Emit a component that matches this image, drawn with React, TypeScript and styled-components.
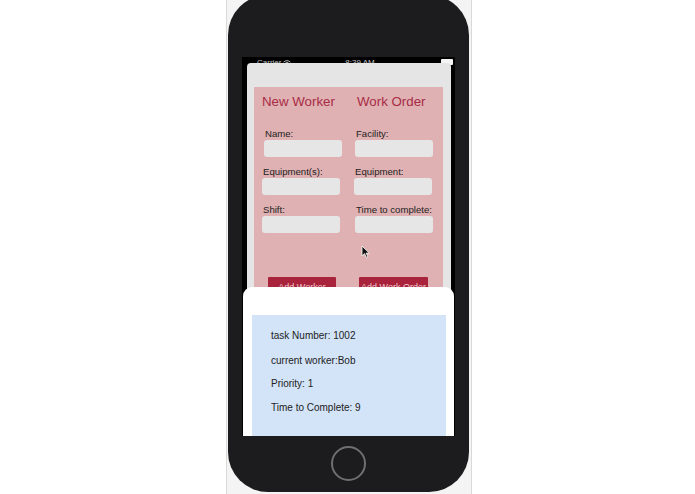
import React from "react";
import styled, { createGlobalStyle } from "styled-components";

const Global = createGlobalStyle`
  html, body { margin: 0; padding: 0; background: #ffffff; }
  body { font-family: "Liberation Sans", Arial, sans-serif; }
`;

const Stage = styled.div`
  width: 695px;
  height: 494px;
  overflow: hidden;
  display: flex;
  padding-left: 226px;
  box-sizing: border-box;
  background: #ffffff;
`;

const Frame = styled.div`
  width: 243px;
  height: 494px;
  border-left: 1px solid #d9d9d9;
  border-right: 1px solid #d9d9d9;
  background: #f4f4f4;
  display: flex;
  padding-left: 1px;
  box-sizing: content-box;
`;

const Phone = styled.div`
  width: 241px;
  height: 497px;
  margin-top: -5px;
  border-radius: 40px;
  background: #1c1c1e;
  padding-top: 62px;
  box-sizing: border-box;
  display: flex;
  flex-direction: column;
  align-items: center;
`;

const Screen = styled.div`
  position: relative;
  width: 213px;
  height: 379px;
  background: #000;
  overflow: hidden;
  display: flex;
  flex-direction: column;
`;

const StatusBar = styled.div`
  height: 6px;
  flex: 0 0 6px;
  overflow: visible;
  display: flex;
  justify-content: space-between;
  align-items: flex-start;
  padding: 2px 2px 0 15px;
  box-sizing: border-box;
  font-size: 8px;
  line-height: 8px;
  color: #c4c4c4;
  position: relative;
  z-index: 0;
`;

const Carrier = styled.span`
  display: flex;
  align-items: center;
  gap: 2px;
  width: 60px;
`;

const Clock = styled.span`
  width: 40px;
  text-align: center;
  margin-right: 38px;
`;

const Battery = styled.span`
  width: 12px;
  height: 6px;
  background: #f4f4f4;
  border-radius: 1px;
`;

const GraySheet = styled.div`
  position: relative;
  z-index: 1;
  flex: 1;
  margin: 0 4px 0 5px;
  background: #e5e5e5;
  border-radius: 4px 4px 0 0;
  padding: 24px 8px 0 7px;
  display: flex;
  flex-direction: column;
`;

const PinkPanel = styled.div`
  background: #dfb1b2;
  height: 230px;
  padding: 7px 8px 0 8px;
  box-sizing: border-box;
  display: grid;
  grid-template-columns: 80px 80px;
  column-gap: 12px;
  align-content: start;
`;

const Column = styled.div`
  display: flex;
  flex-direction: column;
`;

const Heading = styled.h2<{ $shift?: number }>`
  margin: 0 0 18px ${(p) => p.$shift ?? 0}px;
  font-size: 13.3px;
  line-height: 16px;
  font-weight: 400;
  color: #a82b46;
  white-space: nowrap;
`;

const Field = styled.div<{ $indent?: number }>`
  display: flex;
  flex-direction: column;
  margin-left: ${(p) => p.$indent ?? 0}px;
  margin-bottom: 9px;
`;

const Label = styled.label`
  font-size: 9.6px;
  line-height: 12px;
  color: #222;
  margin-left: 1px;
  white-space: nowrap;
`;

const Input = styled.div`
  height: 17px;
  width: 78px;
  background: #e6e6e6;
  border-radius: 3px;
`;

const Button = styled.button<{ $indent: number; $width: number }>`
  margin-top: 35px;
  margin-left: ${(p) => p.$indent}px;
  width: ${(p) => p.$width}px;
  height: 15px;
  padding: 3px 0 0;
  border: none;
  border-radius: 1px;
  background: #a8233b;
  color: #f1c9cf;
  font-family: "Liberation Sans", Arial, sans-serif;
  font-size: 9px;
  line-height: 15px;
  white-space: nowrap;
`;

const BottomSheet = styled.div`
  position: absolute;
  z-index: 2;
  left: 1px;
  right: 1px;
  top: 230px;
  bottom: 0;
  background: #ffffff;
  border-radius: 9px 9px 0 0;
  padding: 28px 8px 0 9px;
  display: flex;
  flex-direction: column;
`;

const TaskCard = styled.div`
  flex: 1;
  background: #d3e3f8;
  padding: 15px 10px 0 19px;
  display: flex;
  flex-direction: column;
  gap: 12px;
`;

const TaskLine = styled.div<{ $extra?: number }>`
  font-size: 10px;
  line-height: 12px;
  color: #222;
  white-space: nowrap;
  margin-bottom: ${(p) => p.$extra ?? 0}px;
`;

const Cursor = styled.svg`
  position: absolute;
  z-index: 1;
  left: 119px;
  top: 188px;
`;

const HomeButton = styled.div`
  margin-top: 10px;
  width: 31px;
  height: 31px;
  border-radius: 50%;
  border: 2px solid #6f6f71;
`;

const Wifi = () => (
  <svg width="8" height="6" viewBox="0 0 7 5">
    <path d="M0.5 1.8 A4 4 0 0 1 6.5 1.8" stroke="#c4c4c4" strokeWidth="0.8" fill="none" />
    <path d="M1.7 3 A2.4 2.4 0 0 1 5.3 3" stroke="#c4c4c4" strokeWidth="0.8" fill="none" />
    <circle cx="3.5" cy="4.3" r="0.6" fill="#c4c4c4" />
  </svg>
);

export default function App() {
  return (
    <>
      <Global />
      <Stage>
        <Frame>
          <Phone>
            <Screen>
              <StatusBar>
                <Carrier>
                  Carrier <Wifi />
                </Carrier>
                <Clock>8:39 AM</Clock>
                <Battery />
              </StatusBar>
              <GraySheet>
                <PinkPanel>
                  <Column>
                    <Heading>New Worker</Heading>
                    <Field $indent={2}>
                      <Label>Name:</Label>
                      <Input />
                    </Field>
                    <Field>
                      <Label>Equipment(s):</Label>
                      <Input />
                    </Field>
                    <Field>
                      <Label>Shift:</Label>
                      <Input />
                    </Field>
                    <Button $indent={6} $width={68}>Add Worker</Button>
                  </Column>
                  <Column>
                    <Heading $shift={3}>Work Order</Heading>
                    <Field $indent={1}>
                      <Label>Facility:</Label>
                      <Input />
                    </Field>
                    <Field>
                      <Label>Equipment:</Label>
                      <Input />
                    </Field>
                    <Field $indent={1}>
                      <Label>Time to complete:</Label>
                      <Input />
                    </Field>
                    <Button $indent={5} $width={69}>Add Work Order</Button>
                  </Column>
                </PinkPanel>
              </GraySheet>
              <Cursor width="9" height="13" viewBox="0 0 9 13">
                <path d="M1 1 L1 11 L3.5 8.6 L5.3 12.3 L6.8 11.6 L5.1 8.1 L8.3 8.1 Z" fill="#111" stroke="#fff" strokeWidth="0.8" strokeLinejoin="round" />
              </Cursor>
              <BottomSheet>
                <TaskCard>
                  <TaskLine $extra={1}>task Number: 1002</TaskLine>
                  <TaskLine $extra={-1}>current worker:Bob</TaskLine>
                  <TaskLine>Priority: 1</TaskLine>
                  <TaskLine>Time to Complete: 9</TaskLine>
                </TaskCard>
              </BottomSheet>
            </Screen>
            <HomeButton />
          </Phone>
        </Frame>
      </Stage>
    </>
  );
}
